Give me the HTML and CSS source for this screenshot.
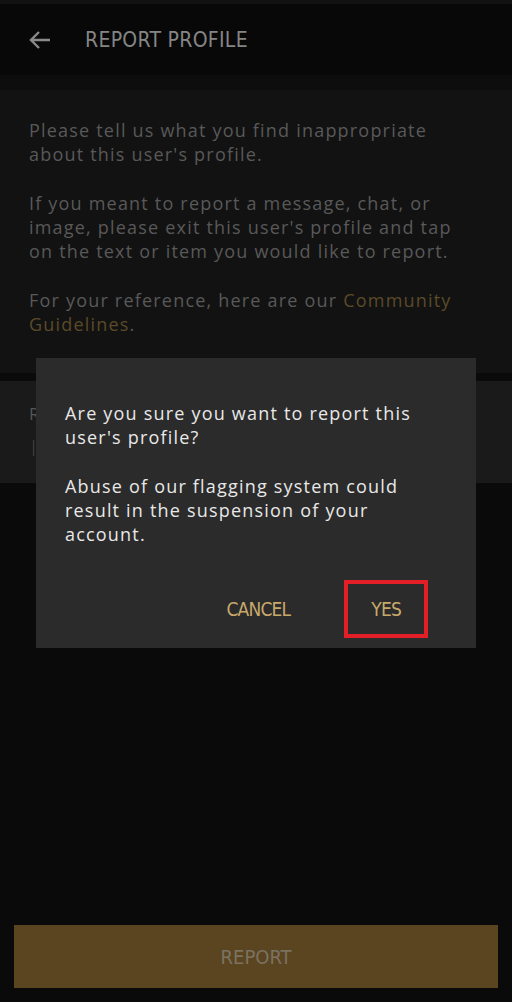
FILE: index.html
```html
<!DOCTYPE html>
<html lang="en">
<head>
    <meta charset="UTF-8">
    <title>Report Profile</title>
    <link rel="stylesheet" href="styles.css">
</head>
<body>

    <div class="page">
        <!--header-->
        <div class="status"></div>
        <div class="topbar">
            <svg class="back" width="24" height="24" viewBox="0 0 24 24">
                <path d="M22 12H3M11 4L3 12L11 20" fill="none" stroke="#8a8a8a" stroke-width="2.4"/>
            </svg>
            <h1>REPORT PROFILE</h1>
        </div>
        <div class="shade"></div>

        <!--intro-->
        <div class="intro">
            <p>Please tell us what you find inappropriate about this user's profile.</p>
            <p>If you meant to report a message, chat, or image, please exit this user's profile and tap on the text or item you would like to report.</p>
            <p>For your reference, here are our <a href="#">Community Guidelines</a>.</p>
        </div>

        <!--reason field-->
        <div class="field">
            <span class="label">Reason</span>
            <span class="cursor">|</span>
        </div>

        <div class="footer">
            <button class="report">REPORT</button>
        </div>
    </div>

    <!--confirm dialog-->
    <div class="dialog">
        <p>Are you sure you want to report this user's profile?</p>
        <p>Abuse of our flagging system could result in the suspension of your account.</p>
        <div class="actions">
            <span class="act">CANCEL</span>
            <span class="act yes">YES</span>
        </div>
    </div>

</body>
</html>
```

FILE: styles.css
```css
/*reset*/
body, p, h1, button {
    margin: 0;
    padding: 0;
}
a {
    text-decoration: none;
}
body {
    background-color: #0a0a0a;
    font-family: "Open Sans", "Noto Sans", sans-serif;
}

/*page*/
.page {
    display: flex;
    flex-direction: column;
    min-height: 1002px;
}
.status {
    height: 4px;
    background-color: #121212;
}
.topbar {
    display: flex;
    align-items: center;
    height: 71px;
    padding-left: 28px;
    background-color: #080808;
}
.topbar .back {
    display: block;
}
.topbar h1 {
    margin-left: 33px;
    color: #858585;
    font-family: "DejaVu Sans", sans-serif;
    font-stretch: condensed;
    font-size: 21px;
    font-weight: normal;
    letter-spacing: 0.3px;
}
.shade {
    height: 15px;
    background-color: #0d0d0d;
}
.intro {
    padding: 28px 42px 36px 29px;
    background-color: #121212;
    color: #595959;
    font-size: 18px;
    line-height: 24.3px;
    letter-spacing: 1.2px;
}
.intro p + p {
    margin-top: 24.3px;
}
.intro a {
    color: #5b4a28;
}
.field {
    display: flex;
    flex-direction: column;
    margin-top: 8px;
    height: 102px;
    padding: 20px 29px 0;
    box-sizing: border-box;
    background-color: #1a1a1a;
    color: #565656;
    font-size: 17px;
    line-height: 26px;
}
.field .cursor {
    margin-top: 6px;
    font-weight: 300;
}
.footer {
    margin-top: auto;
    padding: 0 14px 14px;
}
.report {
    display: block;
    width: 100%;
    height: 63px;
    border: none;
    background-color: #5a4520;
    color: #7b7262;
    font-family: "DejaVu Sans", sans-serif;
    font-stretch: condensed;
    font-size: 20px;
}

/*dialog*/
.dialog {
    position: absolute;
    left: 36px;
    top: 358px;
    width: 440px;
    height: 290px;
    padding: 43px 29px 0;
    box-sizing: border-box;
    background-color: #2b2b2b;
    color: #e8e8e8;
    font-size: 18px;
    line-height: 24.3px;
    letter-spacing: 1.2px;
}
.dialog p + p {
    margin-top: 24.3px;
}
.dialog .actions {
    display: flex;
    justify-content: flex-end;
    align-items: center;
    margin-top: 33px;
    margin-right: 19px;
}
.dialog .act {
    color: #c8a96a;
    font-family: "DejaVu Sans", sans-serif;
    font-stretch: condensed;
    font-size: 19px;
    letter-spacing: -0.8px;
}
.dialog .yes {
    margin-left: 54px;
    padding: 13px 23px;
    border: 4px solid #e41e26;
}
```
